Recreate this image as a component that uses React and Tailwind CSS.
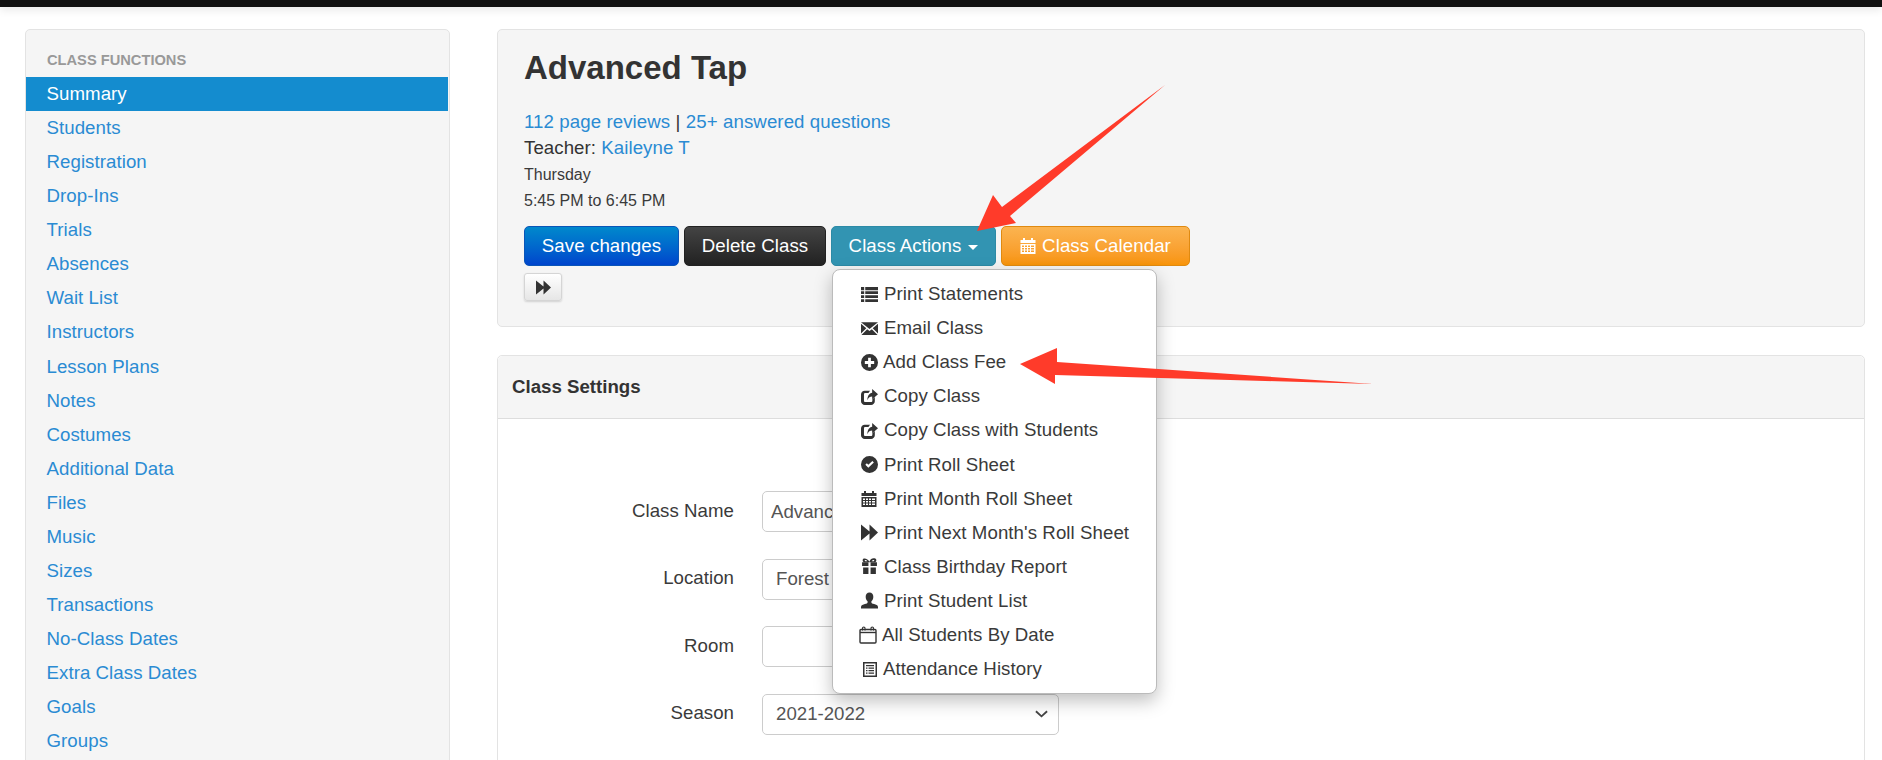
import React from "react";

const I = ({ children }) => (
  <svg viewBox="0 0 16 16" className="w-[17px] h-[17px] shrink-0" fill="#333">{children}</svg>
);
const ThList = () => (
  <I><path d="M0 1h3v3H0zM4 1h12v3H4zM0 5h3v2.600H0zM4 5h12v2.600H4zM0 8.600h3v2.800H0zM4 8.600h12v2.800H4zM0 12.400h3V15H0zM4 12.400h12V15H4z" /></I>
);
const Envelope = () => (
  <I><path d="M0 2h16L8 8.500zM0 3.500v9.300l5-5zM16 3.500v9.300l-5-5zM5.800 8.600 8 10.400l2.200-1.800 5.400 5.400H.4z" /></I>
);
const PlusSign = () => (
  <I><path fillRule="evenodd" d="M8 0a8 8 0 1 1 0 16A8 8 0 0 1 8 0zM6.700 3.600v3.100H3.600v2.600h3.100v3.100h2.600V9.300h3.100V6.700H9.300V3.600z" /></I>
);
const Share = () => (
  <I><path d="M3.500 2.500h5L7 4.800H4c-.7 0-1.200.5-1.200 1.200v6c0 .7.500 1.200 1.200 1.200h5.500c.7 0 1.200-.5 1.200-1.200v-1.500l2.300-2V12.500c0 1.900-1.600 3.500-3.500 3.500h-6C1.600 16 0 14.400 0 12.500V6c0-1.900 1.600-3.500 3.500-3.500z" /><path d="M10.500 1 16 5.800l-5.500 4.900V8C8.500 8 7 9 6 11.500c0-4 1.800-6.500 4.500-7z" /></I>
);
const OkSign = () => (
  <I><path fillRule="evenodd" d="M8 0a8 8 0 1 1 0 16A8 8 0 0 1 8 0zM4.100 8.200 6.900 11l5.200-4.900-1.400-1.400-3.800 3.500-1.400-1.400z" /></I>
);
const Calendar = ({ fill = "#333" }) => (
  <svg viewBox="0 0 16 16" className="w-4 h-4 shrink-0" fill={fill}>
    <path d="M3 0h2v2h6V0h2v2h2.500v3H.5V2H3z" />
    <path fillRule="evenodd" d="M.5 6h15v10H.5zM2 7.500V9h2V7.500zM5 7.500V9h2V7.500zM8 7.500V9h2V7.500zM11 7.500V9h3V7.500zM2 10v1.500h2V10zM5 10v1.500h2V10zM8 10v1.500h2V10zM11 10v1.500h3V10zM2 12.500V14h2v-1.500zM5 12.500V14h2v-1.500zM8 12.500V14h2v-1.500zM11 12.500V14h3v-1.500z" />
  </svg>
);
const Forward = () => (
  <I><path d="M0 .5 8 7V.5L16 8l-8 7.500V9L0 15.500z" /></I>
);
const Gift = () => (
  <I><path d="M1 4h6v3.500H1zM9 4h6v3.500H9zM2 9h5v6H2zM9 9h5v6H9z" /><path fillRule="evenodd" d="M2.500.5C4.500 0 7 1.500 8 3.500 9-.0 11.500 0 13.500.5c1.300.5 1.300 2.500 0 3.500h-11c-1.300-1-1.300-3 0-3.500zM4 1.800c-.6 0-.8.8 0 1.200h2C5.500 2.300 4.700 1.800 4 1.800zM12 1.800c-.7 0-1.500.5-2 1.200h2c.8-.4.6-1.200 0-1.200z" /></I>
);
const User = () => (
  <I><path d="M8 .5c2.300 0 3.600 1.800 3.600 4 0 1.800-.8 3.400-1.800 4.200v1.200c0 .7 1 1 2.500 1.500 1.700.6 3.700 1.300 3.700 2.600v1.500H0V14c0-1.300 2-2 3.700-2.600 1.500-.5 2.500-.8 2.500-1.500V8.700C5.200 7.900 4.400 6.300 4.400 4.500c0-2.200 1.300-4 3.600-4z" /></I>
);
const CalOutline = () => (
  <svg viewBox="0 0 18 18" className="w-[18px] h-[18px] shrink-0" fill="none" stroke="#333" strokeWidth="1.400">
    <rect x="1" y="3.500" width="16" height="13.500" rx="1" />
    <path d="M1 6.500h16" />
    <path d="M3.500 4.500V2c0-1.300 2.500-1.300 2.500 0v2.500M12 4.500V2c0-1.300 2.500-1.300 2.500 0v2.500" strokeWidth="1.100" />
  </svg>
);
const ListAlt = () => (
  <svg viewBox="0 0 14 15" className="w-[14px] h-[15px] shrink-0" fill="#333">
    <path fillRule="evenodd" d="M0 0h14v15H0zM1.500 1.500v12h11v-12zM3 3h8v1.300H3zM3 5.500h1.500v1.300H3zM5.500 5.500H11v1.300H5.500zM3 8h1.500v1.300H3zM5.500 8H11v1.300H5.500zM3 10.500h1.500v1.300H3zM5.500 10.500H11v1.300H5.500z" />
  </svg>
);

const nav = ["Summary","Students","Registration","Drop-Ins","Trials","Absences","Wait List","Instructors","Lesson Plans","Notes","Costumes","Additional Data","Files","Music","Sizes","Transactions","No-Class Dates","Extra Class Dates","Goals","Groups"];

const menu = [
  [<ThList />, "Print Statements", "pl-[28px] gap-[6px]"],
  [<Envelope />, "Email Class", "pl-[28px] gap-[6px]"],
  [<PlusSign />, "Add Class Fee", "pl-[28px] gap-[5px]"],
  [<Share />, "Copy Class", "pl-[28px] gap-[6px]"],
  [<Share />, "Copy Class with Students", "pl-[28px] gap-[6px]"],
  [<OkSign />, "Print Roll Sheet", "pl-[28px] gap-[6px]"],
  [<Calendar />, "Print Month Roll Sheet", "pl-[28px] gap-[7px]"],
  [<Forward />, "Print Next Month's Roll Sheet", "pl-[28px] gap-[6px]"],
  [<Gift />, "Class Birthday Report", "pl-[28px] gap-[6px]"],
  [<User />, "Print Student List", "pl-[28px] gap-[6px]"],
  [<CalOutline />, "All Students By Date", "pl-[26px] gap-[5px]"],
  [<ListAlt />, "Attendance History", "pl-[30px] gap-[6px]"],
];

const fieldBase = "w-[297px] h-[41px] border border-[#ccc] rounded-[5px] bg-white text-[18.67px] text-[#555] flex items-center";

const Field = ({ label, children }) => (
  <div className="flex items-center">
    <div className="w-[236px] pb-[2px] text-right text-[18.67px] text-[#3a3a3a] tracking-[0.04px]">{label}</div>
    <div className="ml-[28px]">{children}</div>
  </div>
);

export default function App() {
  return (
    <div className="relative h-[760px] overflow-hidden bg-white text-[#333] font-['Liberation_Sans',Arial,sans-serif]">
      <div className="h-[7px] bg-[#111] shadow-[0_2px_10px_rgba(0,0,0,0.12)]" />
      <div className="flex pl-[25px] pr-[17px] pt-[22px] items-start">
        <aside className="w-[425px] shrink-0 h-[760px] border border-[#e3e3e3] rounded-[5px] bg-[#f5f5f5] pt-[19px]">
          <div className="pl-[21px] h-[28px] text-[14.67px] font-bold text-[#999] uppercase leading-[22px]">Class Functions</div>
          <ul>
            {nav.map((n, i) => (
              <li
                key={n}
                className={`h-[34.07px] pl-[20.5px] flex items-center text-[18.67px] tracking-[0.06px] ${i === 0 ? "bg-[#148ccf] text-white mr-[1px]" : "text-[#2a8bd3]"}`}
              >
                {n}
              </li>
            ))}
          </ul>
        </aside>

        <main className="flex-1 ml-[47px]">
          <section className="h-[298px] border border-[#e3e3e3] rounded-[5px] bg-[#f5f5f5] pl-[26px] pt-[16px]">
            <h1 className="text-[33px] leading-[44px] font-bold text-[#333] h-[63px]">Advanced Tap</h1>
            <div className="text-[18.67px] leading-[26px] tracking-[0.09px]">
              <a className="text-[#2a8bd3]">112 page reviews</a>
              <span> | </span>
              <a className="text-[#2a8bd3]">25+ answered questions</a>
            </div>
            <div className="text-[18.67px] leading-[26px] tracking-[0.06px]">
              Teacher: <a className="text-[#2a8bd3]">Kaileyne T</a>
            </div>
            <div className="text-[16px] leading-[26px] mt-[1px] text-[#3a3a3a]">Thursday</div>
            <div className="text-[16px] leading-[26px] text-[#3a3a3a]">5:45 PM to 6:45 PM</div>
            <div className="flex gap-[5px] mt-[12px]">
              <button className="h-[40px] w-[155px] rounded-[5px] border border-[#0a55b8] bg-gradient-to-b from-[#0088cc] to-[#0044cc] text-white text-[18.67px] tracking-[0.09px]">Save changes</button>
              <button className="h-[40px] w-[142px] rounded-[5px] border border-[#222] bg-gradient-to-b from-[#444] to-[#222] text-white text-[18.67px] tracking-[0.06px]">Delete Class</button>
              <div className="relative">
                <button className="h-[40px] w-[165px] rounded-[5px] border border-[#2c8aa6] bg-[#3294b2] text-white text-[18.67px] tracking-[0.06px] flex items-center justify-center gap-[7px]">
                  Class Actions
                  <span className="w-0 h-0 border-x-[5px] border-x-transparent border-t-[5px] border-t-white mt-[2px]" />
                </button>
                <div className="absolute z-10 left-[1px] top-[43px] w-[325px] h-[425px] pt-[7px] bg-white border border-[#bbb] rounded-[8px] shadow-[0_7px_18px_rgba(0,0,0,0.25)]">
                  {menu.map(([icon, text, cls]) => (
                    <div key={text} className={`h-[34.1px] flex items-center text-[18.67px] text-[#3a3a3a] tracking-[0.07px] ${cls}`}>
                      {icon}
                      <span>{text}</span>
                    </div>
                  ))}
                </div>
              </div>
              <button className="h-[40px] w-[189px] rounded-[5px] border border-[#e08a10] bg-gradient-to-b from-[#fbb450] to-[#f89406] text-white text-[18.67px] tracking-[0.09px] flex items-center justify-center gap-[6px]">
                <Calendar fill="#fff" />
                Class Calendar
              </button>
            </div>
            <button className="mt-[7px] h-[28px] w-[38px] rounded-[3px] border border-[#d5d5d5] bg-gradient-to-b from-white to-[#e6e6e6] shadow-[0_1px_2px_rgba(0,0,0,0.15)] flex items-center justify-center">
              <svg viewBox="0 0 16 16" className="w-[15px] h-[15px]" fill="#333">
                <path d="M0 .5 8 7V.5L16 8l-8 7.500V9L0 15.500z" />
              </svg>
            </button>
          </section>

          <section className="mt-[28px] h-[500px] border border-[#e3e3e3] rounded-[5px] bg-white">
            <div className="h-[63px] bg-[#f5f5f5] border-b border-[#ddd] pl-[14px] flex items-center text-[18.67px] font-bold text-[#333] rounded-t-[5px]">
              Class Settings
            </div>
            <div className="pt-[72px] flex flex-col gap-[26.67px]">
              <Field label="Class Name">
                <input readOnly value="Advanced Tap" className={`${fieldBase} pl-[8px] outline-none`} />
              </Field>
              <Field label="Location">
                <div className={`${fieldBase} pl-[13px]`}>Forest</div>
              </Field>
              <Field label="Room">
                <div className={fieldBase} />
              </Field>
              <Field label="Season">
                <div className={`${fieldBase} pl-[13px] pr-[10px] justify-between`}>
                  <span>2021-2022</span>
                  <svg viewBox="0 0 14 8" className="w-[13px] h-[8px]" fill="none" stroke="#444" strokeWidth="2">
                    <path d="M1 1l6 5.500L13 1" />
                  </svg>
                </div>
              </Field>
            </div>
          </section>
        </main>
      </div>

      <svg className="absolute inset-0 z-20 pointer-events-none" width="1882" height="760" style={{ filter: "blur(0.5px)" }}>
        <polygon fill="#ff3b2a" points="1165,85 1010,216 1016,223 977,231 993,195 1002,207" />
        <polygon fill="#ff3b2a" points="1373,384 1055,375 1055,384 1020,364 1057,348 1057,362" />
      </svg>
    </div>
  );
}
